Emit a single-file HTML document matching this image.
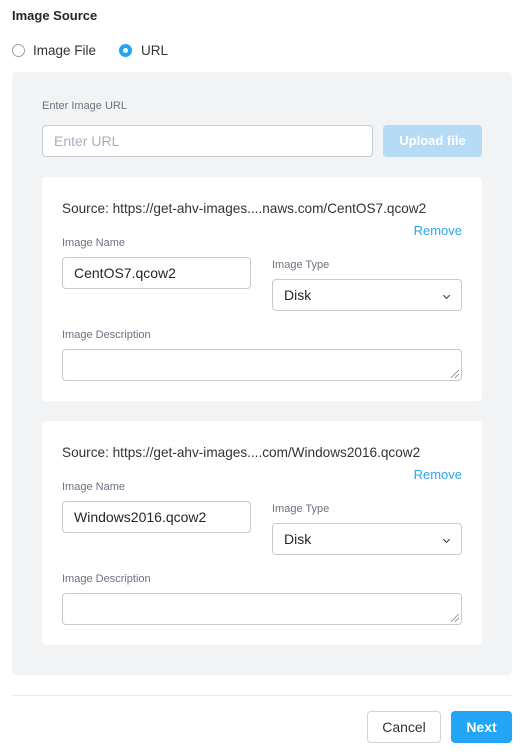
<!DOCTYPE html>
<html><head><meta charset="utf-8"><style>
*{box-sizing:border-box;margin:0;padding:0}
body{width:521px;height:754px;background:#fff;font-family:"Liberation Sans",sans-serif;color:#22272e;position:relative;overflow:hidden}
.a{position:absolute;white-space:nowrap}
.lbl{font-size:11px;color:#6b7280}
.inp{position:absolute;border:1px solid #c4c9d2;border-radius:4px;background:#fff;font-size:14px;color:#22272e;padding-left:11px;display:flex;align-items:center}
.card{position:absolute;left:42px;width:440px;height:224px;background:#fff;border-radius:4px}
.rem{color:#2ba4f2;font-size:13px}
.chev{position:absolute;right:12px;top:13px;width:5px;height:5px;border-right:1.5px solid #333;border-bottom:1.5px solid #333;transform:rotate(45deg)}
.grip{position:absolute;right:2px;bottom:2px;width:8px;height:8px;background:linear-gradient(135deg,transparent 45%,#777 45%,#777 52%,transparent 52%,transparent 70%,#777 70%,#777 77%,transparent 77%)}
</style></head><body>
<div class="a" style="left:12px;top:8px;font-size:13px;font-weight:bold;color:#22272e">Image Source</div>
<div class="a" style="left:12px;top:44px;width:13px;height:13px;border:1px solid #9aa1ab;border-radius:50%"></div>
<div class="a" style="left:33px;top:43px;font-size:13.5px;color:#333">Image File</div>
<div class="a" style="left:119px;top:44px;width:13px;height:13px;background:#22a5f7;border-radius:50%"><div style="position:absolute;left:4px;top:4px;width:5px;height:5px;background:#fff;border-radius:50%"></div></div>
<div class="a" style="left:141px;top:43px;font-size:13.5px;color:#333">URL</div>

<div class="a" style="left:12px;top:72px;width:500px;height:603px;background:#f2f3f5;border-radius:4px"></div>
<div class="a lbl" style="left:42px;top:100px">Enter Image URL</div>
<div class="inp" style="left:42px;top:125px;width:331px;height:32px;color:#a9b0bb">Enter URL</div>
<div class="a" style="left:383px;top:125px;width:99px;height:32px;background:#b5dbf5;border-radius:4px;color:#fff;font-size:13px;font-weight:bold;text-align:center;line-height:32px">Upload file</div>

<div class="card" style="top:177px">
<div class="a" style="left:20px;top:24px;font-size:13.6px;color:#333">Source: https://get-ahv-images....naws.com/CentOS7.qcow2</div>
<div class="a rem" style="right:20px;top:46px">Remove</div>
<div class="a lbl" style="left:20px;top:60px">Image Name</div>
<div class="inp" style="left:20px;top:80px;width:189px;height:32px">CentOS7.qcow2</div>
<div class="a lbl" style="left:230px;top:82px">Image Type</div>
<div class="inp" style="left:230px;top:102px;width:190px;height:32px">Disk<span class="chev"></span></div>
<div class="a lbl" style="left:20px;top:152px">Image Description</div>
<div class="inp" style="left:20px;top:172px;width:400px;height:32px"><div class="grip"></div></div>
</div>

<div class="card" style="top:421px">
<div class="a" style="left:20px;top:24px;font-size:13.6px;color:#333">Source: https://get-ahv-images....com/Windows2016.qcow2</div>
<div class="a rem" style="right:20px;top:46px">Remove</div>
<div class="a lbl" style="left:20px;top:60px">Image Name</div>
<div class="inp" style="left:20px;top:80px;width:189px;height:32px">Windows2016.qcow2</div>
<div class="a lbl" style="left:230px;top:82px">Image Type</div>
<div class="inp" style="left:230px;top:102px;width:190px;height:32px">Disk<span class="chev"></span></div>
<div class="a lbl" style="left:20px;top:152px">Image Description</div>
<div class="inp" style="left:20px;top:172px;width:400px;height:32px"><div class="grip"></div></div>
</div>

<div class="a" style="left:12px;top:695px;width:500px;height:1px;background:#e8eaed"></div>
<div class="a" style="left:367px;top:711px;width:74px;height:32px;border:1px solid #d0d4da;border-radius:4px;font-size:14px;color:#333;text-align:center;line-height:30px">Cancel</div>
<div class="a" style="left:451px;top:711px;width:61px;height:32px;background:#22a5f7;border-radius:4px;font-size:14px;font-weight:bold;color:#fff;text-align:center;line-height:32px">Next</div>
</body></html>
